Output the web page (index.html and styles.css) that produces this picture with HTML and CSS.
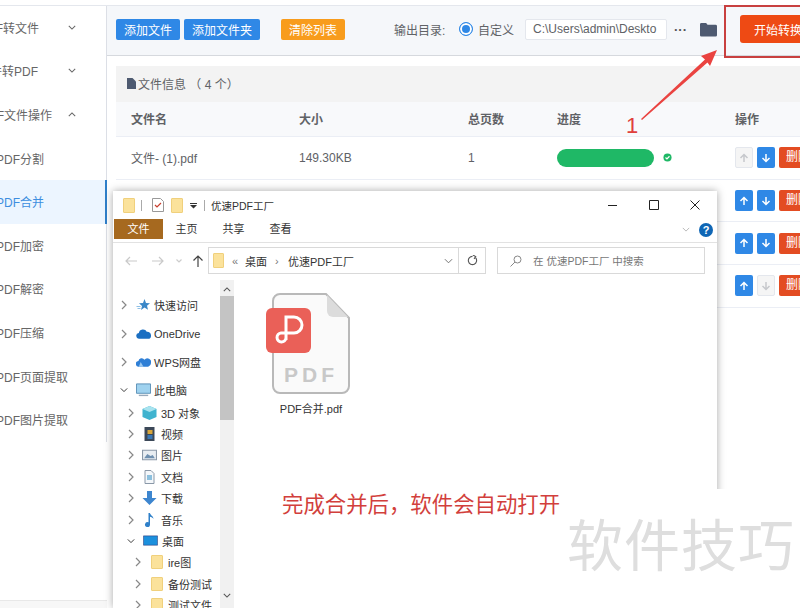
FILE: index.html
```html
<!DOCTYPE html>
<html lang="zh">
<head>
<meta charset="utf-8">
<title>优速PDF工厂</title>
<link rel="stylesheet" href="styles.css">
</head>
<body>
<div class="app">
  <aside class="side">
    <div class="navlist">
    <div class="nav head"><span class="lbl t1">PDF转文件</span><svg class="chev" viewBox="0 0 10 6"><path d="M1 1l4 4 4-4"/></svg></div>
    <div class="nav head"><span class="lbl t2">文件转PDF</span><svg class="chev" viewBox="0 0 10 6"><path d="M1 1l4 4 4-4"/></svg></div>
    <div class="nav head"><span class="lbl t3">PDF文件操作</span><svg class="chev" viewBox="0 0 10 6"><path d="M1 5l4-4 4 4"/></svg></div>
    <div class="nav"><span class="lbl sub">PDF分割</span></div>
    <div class="nav on"><span class="lbl sub">PDF合并</span></div>
    <div class="nav"><span class="lbl sub">PDF加密</span></div>
    <div class="nav"><span class="lbl sub">PDF解密</span></div>
    <div class="nav"><span class="lbl sub">PDF压缩</span></div>
    <div class="nav"><span class="lbl sub">PDF页面提取</span></div>
    <div class="nav"><span class="lbl sub">PDF图片提取</span></div>
    </div>
    <div class="side-foot"></div>
  </aside>
  <main class="main">
    <div class="toolbar">
      <button class="btn blue">添加文件</button>
      <button class="btn blue">添加文件夹</button>
      <button class="btn orange">清除列表</button>
      <span class="outlbl">输出目录:</span>
      <span class="radio"></span>
      <span class="custom">自定义</span>
      <span class="path">C:\Users\admin\Deskto</span>
      <span class="dots">···</span>
      <svg class="folder" viewBox="0 0 18 15"><path d="M0 2a1.500 1.500 0 0 1 1.500-1.500h5l1.500 2h8.500A1.500 1.500 0 0 1 18 4v9.500a1.500 1.500 0 0 1-1.500 1.500h-15A1.500 1.500 0 0 1 0 13.500z"/></svg>
      <button class="start">开始转换</button>
    </div>
    <div class="content">
      <div class="info"><svg class="doc" viewBox="0 0 9 11"><path d="M0 0h5.500L9 3.500V11H0z"/></svg>文件信息 （ 4 个）</div>
      <div class="row thead"><span class="c1">文件名</span><span class="c2">大小</span><span class="c3">总页数</span><span class="c4">进度</span><span class="c5">操作</span></div>
      <div class="row"><span class="c1">文件- (1).pdf</span><span class="c2">149.30KB</span><span class="c3">1</span>
        <span class="c4 prog"><i class="bar"></i><svg class="ok" viewBox="0 0 10 10"><circle cx="5" cy="5" r="4.500"/><path d="M2.800 5l1.600 1.600 2.800-3"/></svg></span>
        <span class="c5 ops"><b class="ar off"><svg viewBox="0 0 10 10"><path d="M5 9V1.500M1.500 5L5 1.500 8.500 5"/></svg></b><b class="ar"><svg viewBox="0 0 10 10"><path d="M5 1v7.500M1.500 5L5 8.500 8.500 5"/></svg></b><b class="del">删除</b></span></div>
      <div class="row"><span class="c1"></span><span class="c2"></span><span class="c3"></span><span class="c4"></span>
        <span class="c5 ops"><b class="ar"><svg viewBox="0 0 10 10"><path d="M5 9V1.500M1.500 5L5 1.500 8.500 5"/></svg></b><b class="ar"><svg viewBox="0 0 10 10"><path d="M5 1v7.500M1.500 5L5 8.500 8.500 5"/></svg></b><b class="del">删除</b></span></div>
      <div class="row"><span class="c1"></span><span class="c2"></span><span class="c3"></span><span class="c4"></span>
        <span class="c5 ops"><b class="ar"><svg viewBox="0 0 10 10"><path d="M5 9V1.500M1.500 5L5 1.500 8.500 5"/></svg></b><b class="ar"><svg viewBox="0 0 10 10"><path d="M5 1v7.500M1.500 5L5 8.500 8.500 5"/></svg></b><b class="del">删除</b></span></div>
      <div class="row"><span class="c1"></span><span class="c2"></span><span class="c3"></span><span class="c4"></span>
        <span class="c5 ops"><b class="ar"><svg viewBox="0 0 10 10"><path d="M5 9V1.500M1.500 5L5 1.500 8.500 5"/></svg></b><b class="ar off"><svg viewBox="0 0 10 10"><path d="M5 1v7.500M1.500 5L5 8.500 8.500 5"/></svg></b><b class="del">删除</b></span></div>
    </div>
  </main>
</div>

<div class="marker"></div>
<svg class="arrow" viewBox="0 0 82 75"><path d="M3 72L67 12.500l-4-3.500 16-6-7 16-2.500-3.500L4 73z"/></svg>
<span class="one">1</span>

<section class="win">
  <div class="titlebar">
    <i class="fold"></i><i class="sep"></i>
    <svg class="chk" viewBox="0 0 12 14"><path class="pg" d="M.5.5h8l3 3v10H.500z"/><path class="tick" d="M3 7l2 2 4-4"/></svg>
    <i class="fold"></i>
    <svg class="qa" viewBox="0 0 7 7"><path d="M0 1h7v1H0zM0 3h7L3.500 6.500z"/></svg><i class="sep"></i>
    <span class="wtitle">优速PDF工厂</span>
    <span class="caps">
      <svg viewBox="0 0 10 10"><path d="M0 5.500h9"/></svg>
      <svg viewBox="0 0 10 10"><path d="M.5.500h9v9h-9z"/></svg>
      <svg viewBox="0 0 10 10"><path d="M.5.500l9 9M9.500.500l-9 9"/></svg>
    </span>
  </div>
  <div class="ribbon">
    <span class="tab file">文件</span><span class="tab">主页</span><span class="tab">共享</span><span class="tab">查看</span>
    <svg class="rchev" viewBox="0 0 10 6"><path d="M1 1l4 4 4-4"/></svg>
    <span class="help">?</span>
  </div>
  <div class="addr">
    <svg class="nv dim" viewBox="0 0 12 10"><path d="M12 5H1M5 1L1 5l4 4"/></svg>
    <svg class="nv dim fw" viewBox="0 0 12 10"><path d="M0 5h11M7 1l4 4-4 4"/></svg>
    <svg class="nv tiny" viewBox="0 0 6 4"><path d="M.5.500L3 3 5.500.500"/></svg>
    <svg class="nv up" viewBox="0 0 12 12"><path d="M6 12V1M1.500 5.500L6 1l4.500 4.500"/></svg>
    <div class="crumb"><i class="fold"></i><span class="cr-a">«</span><span>桌面</span><span class="cr-a">›</span><span>优速PDF工厂</span>
      <svg class="cr-c" viewBox="0 0 10 6"><path d="M1 1l4 4 4-4"/></svg></div>
    <div class="refresh"><svg viewBox="0 0 12 12"><path d="M9.500 3.200A4.500 4.500 0 1 1 6 1.500M6.500 0l3 1.800-1.800 2.400"/></svg></div>
    <div class="search"><svg viewBox="0 0 12 12"><circle cx="7.500" cy="4.500" r="3.500"/><path d="M5 7l-4.500 4.500"/></svg><span>在 优速PDF工厂 中搜索</span></div>
  </div>
  <div class="body">
    <div class="tree">
      <div class="ti l0"><svg class="tw" viewBox="0 0 6 10"><path d="M1 1l4 4-4 4"/></svg><svg class="ic" viewBox="0 0 14 14"><path fill="#3a87c8" d="M8 1l1.500 4 4 .2-3 2.600 1 4-3.500-2.200L4.500 12l1-4L2.500 5.200l4-.2z"/><path fill="#8fc0e6" d="M0 8h4v1H0zM1 10h3v1H1z"/></svg><span>快速访问</span></div>
      <div class="ti l0"><svg class="tw" viewBox="0 0 6 10"><path d="M1 1l4 4-4 4"/></svg><svg class="ic" viewBox="0 0 16 12"><path fill="#1b6fc2" d="M3.500 11a3 3 0 0 1-.5-6 4.500 4.500 0 0 1 8.500-1.300A4 4 0 0 1 16 8a3 3 0 0 1-3 3z"/></svg><span>OneDrive</span></div>
      <div class="ti l0"><svg class="tw" viewBox="0 0 6 10"><path d="M1 1l4 4-4 4"/></svg><svg class="ic" viewBox="0 0 16 12"><path fill="#2f7fd6" d="M3 11a3 3 0 0 1-.4-6A3.500 3.500 0 0 1 9 3.500 4 4 0 0 1 16 7a4 4 0 0 1-3 4z"/><path fill="#9cc8f0" d="M5 6l3 5H3z"/></svg><span>WPS网盘</span></div>
      <div class="ti l0 pc"><svg class="tw open" viewBox="0 0 10 6"><path d="M1 1l4 4 4-4"/></svg><svg class="ic" viewBox="0 0 16 14"><path fill="#9fd2ef" stroke="#5a8fb5" d="M.5.500h15v10H.500z"/><path fill="#9ab" d="M3 12h10v1.500H3z"/></svg><span>此电脑</span></div>
      <div class="ti l1"><svg class="tw" viewBox="0 0 6 10"><path d="M1 1l4 4-4 4"/></svg><svg class="ic" viewBox="0 0 14 14"><path fill="#3fb3cf" d="M7 0l7 3v8l-7 3-7-3V3z"/><path fill="#a8e3ef" d="M0 3l7 3 7-3-7-3z"/></svg><span>3D 对象</span></div>
      <div class="ti l1"><svg class="tw" viewBox="0 0 6 10"><path d="M1 1l4 4-4 4"/></svg><svg class="ic" viewBox="0 0 14 14"><path fill="#3c4858" d="M2 0h10v14H2z"/><path fill="#d9a63a" d="M5 3h5v4H5z"/><path fill="#3a78b5" d="M5 8h5v4H5z"/></svg><span>视频</span></div>
      <div class="ti l1"><svg class="tw" viewBox="0 0 6 10"><path d="M1 1l4 4-4 4"/></svg><svg class="ic" viewBox="0 0 14 12"><path fill="#e8edf2" stroke="#8a98a8" d="M.5 1.500h13v9H.500z"/><path fill="#6f90b0" d="M2 9l3-4 3 2 2-1 2 3z"/></svg><span>图片</span></div>
      <div class="ti l1"><svg class="tw" viewBox="0 0 6 10"><path d="M1 1l4 4-4 4"/></svg><svg class="ic" viewBox="0 0 12 14"><path fill="#f4f7fa" stroke="#8a98a8" d="M1.500.500h6l3 3v10h-9z"/><path fill="#8cc0de" d="M3.500 5h5v5h-5z"/></svg><span>文档</span></div>
      <div class="ti l1"><svg class="tw" viewBox="0 0 6 10"><path d="M1 1l4 4-4 4"/></svg><svg class="ic" viewBox="0 0 14 14"><path fill="#3d86cf" d="M4.500 0h5v7H14l-7 7-7-7h4.500z"/></svg><span>下载</span></div>
      <div class="ti l1"><svg class="tw" viewBox="0 0 6 10"><path d="M1 1l4 4-4 4"/></svg><svg class="ic" viewBox="0 0 14 14"><path fill="#2f80c9" d="M6 0h1.500c0 2 3.500 3 3.500 6-1-1.500-2-2-3.500-2.300V11.500A2.500 2.500 0 1 1 6 9.300z"/></svg><span>音乐</span></div>
      <div class="ti l1"><svg class="tw open" viewBox="0 0 10 6"><path d="M1 1l4 4 4-4"/></svg><svg class="ic" viewBox="0 0 16 12"><path fill="#1c90dd" stroke="#226" stroke-opacity=".5" d="M.5.500h15v10H.500z"/></svg><span>桌面</span></div>
      <div class="ti l2"><svg class="tw" viewBox="0 0 6 10"><path d="M1 1l4 4-4 4"/></svg><i class="fold"></i><span>ire图</span></div>
      <div class="ti l2"><svg class="tw" viewBox="0 0 6 10"><path d="M1 1l4 4-4 4"/></svg><i class="fold"></i><span>备份测试</span></div>
      <div class="ti l2"><svg class="tw" viewBox="0 0 6 10"><path d="M1 1l4 4-4 4"/></svg><i class="fold"></i><span>测试文件</span></div>
    </div>
    <div class="sbar">
      <svg viewBox="0 0 10 6"><path d="M1 5l4-4 4 4"/></svg>
      <i class="thumb"></i>
      <svg class="dn" viewBox="0 0 10 6"><path d="M1 1l4 4 4-4"/></svg>
    </div>
    <div class="files">
      <figure class="pdf">
        <svg class="pdfic" viewBox="0 0 84 102">
          <path class="sheet" d="M14 1h46l23 24v68a7 7 0 0 1-7 7H14a7 7 0 0 1-7-7V8a7 7 0 0 1 7-7z"/>
          <path class="ear" d="M61 2l21 22H67a6 6 0 0 1-6-6z"/>
          <rect class="badge" x="0" y="15" width="45" height="45" rx="6"/>
          <path class="mark" d="M20 47V24h8a8 8 0 0 1 0 16H15a4.500 4.500 0 1 0 5 5"/>
          <text class="ptext" x="45" y="89" text-anchor="middle">PDF</text>
        </svg>
        <figcaption>PDF合并.pdf</figcaption>
      </figure>
    </div>
  </div>
</section>
<div class="cover"></div>
<p class="note">完成合并后，软件会自动打开</p>
<p class="wm">软件技巧</p>
</body>
</html>
```
FILE: styles.css
```css
* { box-sizing: border-box; }
html, body { margin: 0; padding: 0; }
body { width: 800px; height: 608px; overflow: hidden; background: #fff; position: relative;
  font-family: "Liberation Sans", "Noto Sans CJK SC", sans-serif; color: #606266; }
.app { display: flex; height: 608px; padding-top: 5px; }
.side { width: 107px; flex: none; border-top: 1px solid #e4e7ed; background: #fff; height: 603px; overflow: hidden; display: flex; flex-direction: column; }
.navlist { height: 436px; border-right: 1px solid #dcdfe6; flex: none; }
.side-foot { margin-top: auto; height: 8px; background: #f7f7f7; border-top: 1px solid #e8e8e8; flex: none; }
.nav { height: 43.600px; display: flex; align-items: center; font-size: 12px; color: #666; position: relative; white-space: nowrap; overflow: hidden; padding-bottom: 1px; }
.nav.on { background: #ecf5ff; color: #3d8ee0; border-right: 2px solid #2f7fc9; margin-right: -1px; }
.lbl { display: block; flex: none; }
.t1 { margin-left: -21px; }
.t2 { margin-left: -22px; }
.t3 { margin-left: -20px; }
.sub { margin-left: -4px; }
.chev { position: absolute; left: 68px; top: 50%; width: 8px; height: 5px; margin-top: -3px; fill: none; stroke: #666; stroke-width: 1.300; }
.main { flex: 1; min-width: 0; overflow: hidden; }
.toolbar { height: 51px; background: #f5f7fa; border-top: 1px solid #e4e7ed; border-bottom: 1px solid #d6d9de; display: flex; align-items: center; padding: 0 0 3px 9px; white-space: nowrap; }
.toolbar > * { flex: none; }
.btn { height: 21px; border: 0; border-radius: 2px; color: #fff; font: 12px "Liberation Sans", "Noto Sans CJK SC", sans-serif; padding: 0; }
.blue { background: #2f88e6; width: 64px; margin-right: 4px; }
.blue + .blue { width: 76px; margin-right: 21px; }
.orange { background: #f89c1c; width: 64px; margin-right: 49px; }
.outlbl { font-size: 12px; width: 65px; color: #606266; }
.radio { width: 14px; height: 14px; border-radius: 50%; background: #2f88e6; border: 1px solid #2f88e6; box-shadow: inset 0 0 0 2px #fff; margin-right: 5px; }
.custom { font-size: 12px; color: #606266; width: 47px; }
.path { width: 142px; height: 21px; background: #fff; border: 1px solid #e4e7ed; border-radius: 2px; font-size: 12px; line-height: 19px; padding-left: 7px; color: #606266; overflow: hidden; }
.dots { width: 13px; margin-left: 7px; font: bold 13px "Liberation Sans", sans-serif; color: #555; }
.folder { width: 17px; height: 15px; fill: #4e5a70; margin-left: 13px; }
.start { width: 80px; height: 28px; margin-left: 23px; border: 0; border-radius: 3px; background: #ee4a14; color: #fff; font: 12px "Liberation Sans", "Noto Sans CJK SC", sans-serif; text-align: left; padding-left: 14px; }
.content { padding: 10px 0 0 9px; }
.info { height: 36px; background: #f3f3f3; display: flex; align-items: center; font-size: 12px; padding: 0 0 2px 11px; color: #606266; }
.doc { width: 9px; height: 11px; fill: #4e5a70; margin-right: 2px; }
.row { height: 42.700px; display: flex; align-items: center; font-size: 12px; border-bottom: 1px solid #ebeef5; }
.thead { height: 35px; background: #f8f9fb; font-weight: bold; color: #606266; padding-bottom: 2px; }
.c1 { width: 183px; padding-left: 15px; flex: none; }
.c2 { width: 169px; flex: none; }
.c3 { width: 89px; flex: none; }
.c4 { width: 178px; flex: none; }
.c5 { flex: none; }
.prog { display: flex; align-items: center; }
.bar { width: 97px; height: 18px; border-radius: 9px; background: #1fb866; }
.ok { width: 9px; height: 9px; margin-left: 9px; }
.ok circle { fill: #1fb866; }
.ok path { fill: none; stroke: #fff; stroke-width: 1.300; }
.ops { display: flex; gap: 4px; }
.ar { width: 18px; height: 21px; background: #2f88e6; border-radius: 2px; display: flex; align-items: center; justify-content: center; }
.ar svg { width: 10px; height: 10px; fill: none; stroke: #fff; stroke-width: 1.500; }
.ar.off { background: #f5f5f5; border: 1px solid #e4e7ed; }
.ar.off svg { stroke: #c6c8cc; }
.del { width: 40px; height: 21px; background: #e34c22; border-radius: 2px; color: #fff; font-size: 12px; font-weight: normal; line-height: 21px; padding-left: 7px; }

.marker { position: absolute; left: 724px; top: 5px; width: 90px; height: 53px; border: 2px solid #c8403f; }
.arrow { position: absolute; left: 638px; top: 47px; width: 82px; height: 75px; fill: #ea4340; }
.one { position: absolute; left: 626px; top: 113px; font: 22px "Liberation Sans", sans-serif; color: #e0403c; }

.win { position: absolute; left: 113px; top: 191px; width: 604px; height: 417px; background: #fff; box-shadow: 0 0 8px rgba(0,0,0,.35); font-size: 11px; color: #444; }
.titlebar { height: 28px; display: flex; align-items: center; padding-left: 10px; }
.fold { display: block; width: 12px; height: 15px; flex: none; background: #fbe29b; border: 1px solid #f0d07c; border-radius: 1px; }
.sep { width: 1px; height: 11px; background: #aaa; margin: 0 10px 0 6px; flex: none; }
.chk { width: 12px; height: 14px; margin-right: 7px; }
.chk .pg { fill: #fff; stroke: #999; }
.chk .tick { fill: none; stroke: #c8402f; stroke-width: 1.200; }
.qa { width: 7px; height: 7px; margin-left: 7px; fill: #333; }
.qa + .sep { margin: 0 6px 0 7px; }
.wtitle { font-size: 10.500px; color: #333; }
.caps { margin-left: auto; display: flex; gap: 31px; padding-right: 17px; }
.caps svg { width: 10px; height: 10px; fill: none; stroke: #222; stroke-width: 1; }
.ribbon { height: 24px; display: flex; align-items: flex-start; border-bottom: 1px solid #e2e2e2; position: relative; padding-left: 1px; }
.tab { width: 47px; height: 20px; line-height: 20px; text-align: center; font-size: 11px; color: #333; flex: none; }
.tab.file { width: 49px; background: #a6691f; color: #fff; }
.rchev { position: absolute; left: 569px; top: 8px; width: 8px; height: 5px; fill: none; stroke: #aaa; }
.help { position: absolute; left: 586px; top: 4px; width: 14px; height: 14px; border-radius: 50%; background: #0f66b5; color: #fff; font: bold 11px/14px "Liberation Sans", sans-serif; text-align: center; }
.addr { height: 37px; display: flex; align-items: flex-start; padding: 4px 0 0 12px; }
.nv { width: 12px; height: 10px; fill: none; stroke: #444; stroke-width: 1.200; margin: 9px 15px 0 0; flex: none; }
.nv.dim { stroke: #c9c9c9; }
.nv.fw { margin-right: 12px; }
.nv.tiny { width: 6px; height: 4px; margin: 12px 10px 0 0; stroke: #ccc; }
.nv.up { height: 12px; margin: 8px 4px 0 0; }
.crumb { width: 251px; height: 27px; border: 1px solid #d9d9d9; display: flex; align-items: center; gap: 8px; padding-left: 4px; font-size: 11px; color: #333; flex: none; white-space: nowrap; }
.crumb .fold { width: 11px; }
.cr-a { color: #777; width: 5px; }
.cr-c { width: 9px; height: 6px; margin-left: auto; margin-right: 5px; fill: none; stroke: #666; }
.refresh { width: 27px; height: 27px; border: 1px solid #d9d9d9; border-left: 0; display: flex; align-items: center; justify-content: center; flex: none; }
.refresh svg { width: 11px; height: 11px; fill: none; stroke: #555; stroke-width: 1.200; }
.search { width: 208px; height: 27px; border: 1px solid #d9d9d9; margin-left: 11px; display: flex; align-items: center; padding-left: 12px; gap: 11px; font-size: 10.500px; color: #777; flex: none; }
.search svg { width: 12px; height: 12px; fill: none; stroke: #888; }
.body { display: flex; height: 328px; overflow: hidden; }
.tree { width: 107px; flex: none; padding-top: 11px; overflow: hidden; }
.ti { height: 21.400px; display: flex; align-items: center; font-size: 11px; color: #333; white-space: nowrap; }
.ti.l0 { height: 28.500px; padding-left: 8px; }
.ti.l0.pc { height: 24px; margin-top: 1.500px; }
.ti.l1 { padding-left: 15px; }
.ti.l2 { padding-left: 22px; }
.tw { width: 6px; height: 10px; fill: none; stroke: #888; stroke-width: 1.200; margin-right: 9px; flex: none; }
.l1 .tw { margin-right: 8px; }
.l2 .tw { margin-right: 10px; }
.tw.open, .l1 .tw.open { width: 8px; height: 6px; stroke: #333; margin-right: 8px; margin-left: -1px; }
.ic { width: 15px; height: 14px; margin-right: 3px; flex: none; }
.l1 .ic { margin-right: 4px; }
.ti .fold { margin-right: 5px; height: 14px; }
.sbar { width: 14px; flex: none; background: #f1f1f1; position: relative; padding-top: 7px; display: flex; flex-direction: column; align-items: center; }
.sbar svg { width: 8px; height: 5px; fill: none; stroke: #555; stroke-width: 1.300; flex: none; }
.thumb { display: block; width: 14px; height: 124px; background: #c4c4c4; margin-top: 4px; flex: none; }
.sbar .dn { margin-top: auto; margin-bottom: 10px; }
.files { flex: 1; padding: 13px 0 0 32px; }
.pdf { margin: 0; width: 84px; display: flex; flex-direction: column; align-items: center; }
.pdfic { width: 84px; height: 102px; display: block; }
.sheet { fill: #fafafa; stroke: #b9b9b9; stroke-width: 2; }
.ear { fill: #dcdcdc; }
.badge { fill: #ea6058; }
.mark { fill: none; stroke: #fff; stroke-width: 3; }
.ptext { font: bold 21px "Liberation Sans", sans-serif; fill: #c8c8c8; letter-spacing: 4px; }
.pdf figcaption { font-size: 11px; color: #333; margin: 5px 0 0 6px; white-space: nowrap; }

.cover { position: absolute; left: 717px; top: 489px; width: 83px; height: 119px; background: #fff; }
.note { position: absolute; left: 282px; top: 491px; margin: 0; font-size: 21.400px; line-height: 28px; color: #d23f3c; white-space: nowrap; }
.wm { position: absolute; left: 567px; top: 511px; margin: 0; font-size: 56px; line-height: 72px; color: #dedede; white-space: nowrap; letter-spacing: 1px; }
```
